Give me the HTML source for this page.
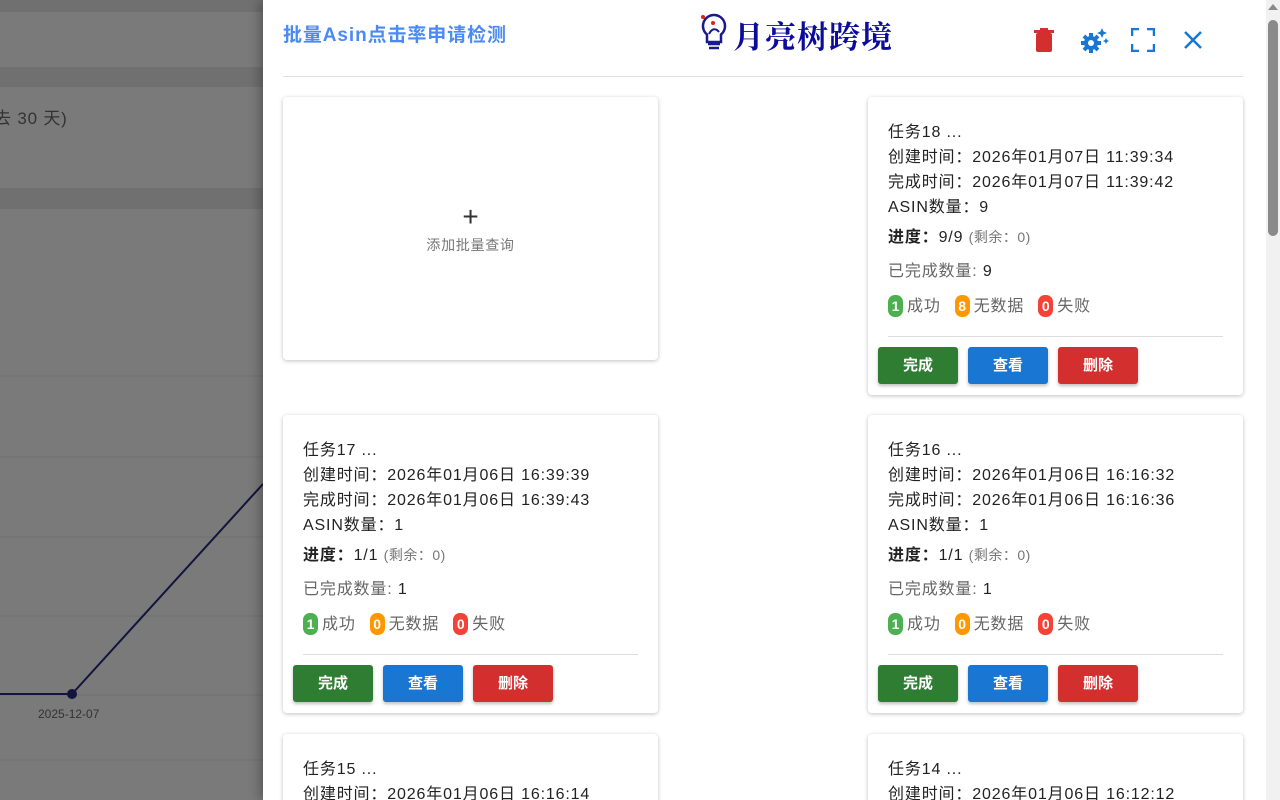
<!DOCTYPE html>
<html><head><meta charset="utf-8"><style>
*{margin:0;padding:0;box-sizing:border-box}
html,body{width:1280px;height:800px;overflow:hidden}
body{position:relative;background:#7a7a7a;font-family:"Liberation Sans","Noto Sans CJK SC",sans-serif}
.bg{position:absolute;left:0;width:263px}
.panel{position:absolute;left:263px;top:0;width:1017px;height:800px;background:#fff;box-shadow:-4px 0 10px rgba(0,0,0,.25);overflow:hidden}
.title{position:absolute;left:20px;top:20px;font-size:19px;font-weight:bold;color:#4a8af4;letter-spacing:0.9px}
.hr{position:absolute;left:20px;top:76px;width:960px;height:1px;background:#e0e0e0}
.card{position:absolute;width:375px;background:#fff;border-radius:4px;box-shadow:0 1px 4px rgba(0,0,0,.25)}
.card .t{position:absolute;left:20px;font-size:16px;color:#222;white-space:nowrap;letter-spacing:0.85px}
.sm{font-size:14px;color:#777;letter-spacing:0.5px}
.b{display:inline-block;color:#fff;font-weight:bold;font-size:14px;border-radius:7px;padding:1px 2px;line-height:20px;min-width:15px;text-align:center;margin-right:4px;letter-spacing:0}
.lbl{color:#666;font-size:16px;margin-right:14px}
.btn{position:absolute;top:0;width:80px;height:37px;border-radius:3px;color:#fff;font-weight:bold;font-size:15px;text-align:center;line-height:37px;box-shadow:0 2px 3px rgba(0,0,0,.25)}
.sep{position:absolute;left:20px;width:335px;height:1px;background:#ddd}
</style></head><body>
<div class="bg" style="top:0;height:12px;background:#6f706f"></div>
<div class="bg" style="top:67px;height:20px;background:#6f706f"></div>
<div class="bg" style="top:188px;height:21px;background:#6f706f"></div>
<div style="position:absolute;left:-6px;top:104px;font-size:17px;color:#333;letter-spacing:0.8px">去 30 天)</div>
<svg style="position:absolute;left:0;top:0" width="263" height="800">
<g stroke="#707070" stroke-width="1">
<line x1="0" y1="376" x2="263" y2="376"/><line x1="0" y1="457" x2="263" y2="457"/><line x1="0" y1="537" x2="263" y2="537"/><line x1="0" y1="616" x2="263" y2="616"/><line x1="0" y1="695" x2="263" y2="695"/><line x1="0" y1="760" x2="263" y2="760"/></g>
<polyline points="0,694 72,694 263,484" fill="none" stroke="#14143c" stroke-width="2"/>
<circle cx="72" cy="694" r="5" fill="#14143c"/>
<text x="38" y="718" font-size="12" fill="#333" font-family="Liberation Sans">2025-12-07</text>
</svg>
<div class="panel">
<div class="title">批量Asin点击率申请检测</div>
<svg style="position:absolute;left:436px;top:12px" width="30" height="42" viewBox="0 0 30 42"><path d="M15 3a11 11 0 0 0-7 19.5V30h14v-7.5A11 11 0 0 0 15 3z" fill="none" stroke="#1a1a8c" stroke-width="2.5"/><path d="M9 32h12M10 36h10" stroke="#1a1a8c" stroke-width="2.5"/><circle cx="4" cy="5" r="2" fill="#d22"/><circle cx="14" cy="11" r="2" fill="#d22"/><path d="M10 22c3-6 7-6 10-2" stroke="#1a1a8c" stroke-width="2" fill="none"/></svg>
<div style="position:absolute;left:470px;top:12px;font-size:31px;font-weight:bold;color:#0c0c9c;font-family:'Noto Serif CJK SC',serif;letter-spacing:1px">月亮树跨境</div>
<svg style="position:absolute;left:770px;top:28px" width="22" height="24" viewBox="0 0 22 24"><rect x="3" y="5" width="16" height="19" rx="2" fill="#d32f2f"/><rect x="1" y="2" width="20" height="3" fill="#d32f2f"/><rect x="7" y="0" width="8" height="3" fill="#d32f2f"/></svg>
<svg style="position:absolute;left:816px;top:28px" width="30" height="26" viewBox="0 0 30 26"><g fill="#1976d2"><circle cx="12" cy="15" r="7"/><g stroke="#1976d2" stroke-width="4"><line x1="12" y1="5" x2="12" y2="25"/><line x1="2" y1="15" x2="22" y2="15"/><line x1="5" y1="8" x2="19" y2="22"/><line x1="19" y1="8" x2="5" y2="22"/></g><circle cx="12" cy="15" r="3" fill="#fff"/><path d="M23 0l1.5 3.5L28 5l-3.5 1.5L23 10l-1.5-3.5L18 5l3.5-1.5z"/><path d="M27 10l1 2 2 1-2 1-1 2-1-2-2-1 2-1z"/></g></svg>
<svg style="position:absolute;left:868px;top:28px" width="24" height="24" viewBox="0 0 24 24" fill="none" stroke="#1976d2" stroke-width="2.5"><path d="M1 8V1h7M16 1h7v7M23 16v7h-7M8 23H1v-7"/></svg>
<svg style="position:absolute;left:920px;top:30px" width="20" height="20" viewBox="0 0 20 20" stroke="#1976d2" stroke-width="2.5"><path d="M2 2l16 16M18 2L2 18"/></svg>
<div class="hr"></div>
<div class="card" style="left:20px;top:97px;height:263px"><div style="position:absolute;width:100%;top:106px;text-align:center;font-size:28px;color:#333;line-height:28px">+</div><div style="position:absolute;width:100%;top:138px;text-align:center;font-size:14px;color:#777;letter-spacing:0.7px">添加批量查询</div></div>
<div id="cards"></div>
</div>
<div style="position:absolute;left:1266px;top:0;width:14px;height:800px;background:#f1f1f1"></div>
<div style="position:absolute;left:1268px;top:20px;width:10px;height:216px;background:#8a8a8a;border-radius:5px"></div>
<div style="position:absolute;left:1268px;top:4px;width:0;height:0;border-left:5px solid transparent;border-right:5px solid transparent;border-bottom:6px solid #8a8a8a"></div>
<script>
function card(x,y,n,c,d,a,s,nd,f){
return `<div class="card" style="left:${x-263}px;top:${y}px;height:298px">
<div class="t" style="top:21px">任务${n} ...</div>
<div class="t" style="top:46px">创建时间：${c}</div>
<div class="t" style="top:71px">完成时间：${d}</div>
<div class="t" style="top:96px">ASIN数量：${a}</div>
<div class="t" style="top:126px"><b>进度：</b>${a}/${a} <span class="sm">(剩余：0)</span></div>
<div class="t" style="top:160px"><span style="color:#666">已完成数量:</span> ${a}</div>
<div class="t" style="top:195px"><span class="b" style="background:#4caf50">${s}</span><span class="lbl">成功</span><span class="b" style="background:#ff9800">${nd}</span><span class="lbl">无数据</span><span class="b" style="background:#f44336">${f}</span><span class="lbl">失败</span></div>
<div class="sep" style="top:239px"></div>
<div style="position:absolute;left:10px;top:250px"><div class="btn" style="left:0;background:#2e7d32">完成</div><div class="btn" style="left:90px;background:#1976d2">查看</div><div class="btn" style="left:180px;background:#d32f2f">删除</div></div>
</div>`}
let h='';
h+=card(868,97,18,'2026年01月07日 11:39:34','2026年01月07日 11:39:42',9,1,8,0);
h+=card(283,415,17,'2026年01月06日 16:39:39','2026年01月06日 16:39:43',1,1,0,0);
h+=card(868,415,16,'2026年01月06日 16:16:32','2026年01月06日 16:16:36',1,1,0,0);
h+=card(283,734,15,'2026年01月06日 16:16:14','',1,1,0,0);
h+=card(868,734,14,'2026年01月06日 16:12:12','',1,1,0,0);
document.getElementById('cards').innerHTML=h;
</script>
</body></html>
